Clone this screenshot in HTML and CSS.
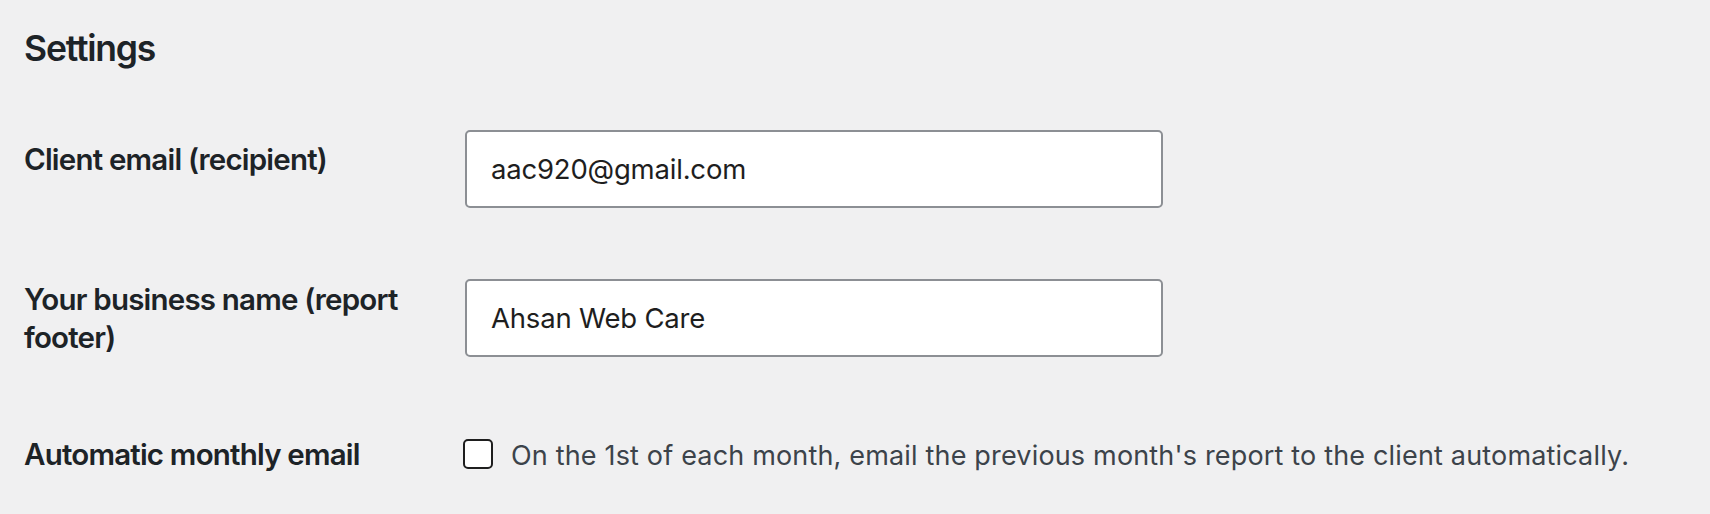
FILE: index.html
```html
<!DOCTYPE html>
<html>
<head>
  <title>Settings</title>
  <link rel="stylesheet" href="styles.css">
</head>
<body>
  <div class="wrap">
    <h2 class="section-title">Settings</h2>

    <div class="form-table">
      <div class="form-row row-email">
        <label class="field-label" for="client-email">Client email (recipient)</label>
        <div class="field">
          <input class="regular-text" type="email" id="client-email" value="aac920@gmail.com">
        </div>
      </div>

      <div class="form-row row-business">
        <label class="field-label" for="business-name">Your business name (report footer)</label>
        <div class="field">
          <input class="regular-text" type="text" id="business-name" value="Ahsan Web Care">
        </div>
      </div>

      <div class="form-row row-auto">
        <div class="field-label">Automatic monthly email</div>
        <label class="field check-field" for="auto-email">
          <input class="check" type="checkbox" id="auto-email">
          <span class="check-text">On the 1st of each month, email the previous month's report to the client automatically.</span>
        </label>
      </div>
    </div>
  </div>
</body>
</html>
```

FILE: styles.css
```css
body{
  margin: 0;
  background: #f0f0f1;
  font-family: Inter, "Noto Sans", sans-serif;
  color: #1d2327;
}
.wrap{
  padding: 26px 0 0 24px;
}
.section-title{
  margin: 0;
  font-size: 35.5px;
  line-height: 46px;
  font-weight: 600;
  letter-spacing: -1.2px;
  color: #1d2327;
}
.form-row{
  display: flex;
  align-items: flex-start;
}
.field-label{
  width: 412px;
  margin-right: 29px;
  font-size: 29.5px;
  line-height: 38px;
  font-weight: 600;
  letter-spacing: -0.8px;
  color: #1d2327;
}
.row-email{
  margin-top: 58px;
}
.row-email .field-label{
  padding-top: 10px;
}
.row-business{
  margin-top: 71px;
}
.row-business .field-label{
  padding-top: 1px;
}
.row-auto{
  margin-top: 78px;
}

.regular-text{
  box-sizing: border-box;
  width: 698px;
  height: 78px;
  margin: 0;
  padding: 0 24px;
  border: 2px solid #8c8f94;
  border-radius: 5px;
  background: #fff;
  font-family: Inter, "Noto Sans", sans-serif;
  font-size: 27.5px;
  letter-spacing: -0.2px;
  color: #1e1e1e;
  outline: none;
}

.check-field{
  display: flex;
  align-items: flex-start;
  margin-left: -2px;
}
.check{
  appearance: none;
  -webkit-appearance: none;
  box-sizing: border-box;
  width: 30px;
  height: 30px;
  margin: 4px 18px 0 0;
  border: 2.5px solid #1e1e1e;
  border-radius: 5px;
  background: #fff;
}
.check-text{
  padding-top: 2px;
  font-size: 27px;
  line-height: 38px;
  letter-spacing: 0.17px;
  color: #3c434a;
  white-space: nowrap;
}
```
